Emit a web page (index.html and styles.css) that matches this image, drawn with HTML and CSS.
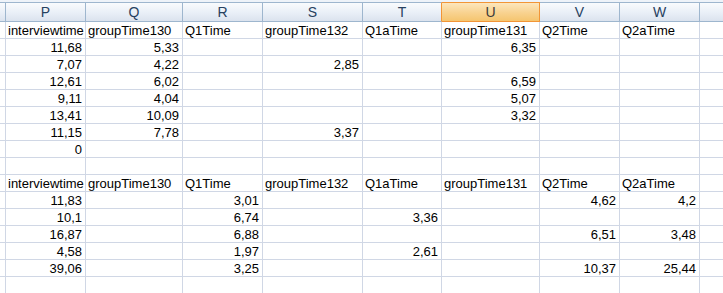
FILE: index.html
```html
<!DOCTYPE html>
<html>
<head>
<meta charset="utf-8">
<link rel="stylesheet" href="styles.css">
</head>
<body>
<div class="sheet">
  <div class="topband"></div>
  <div class="grid">
    <div class="hd"></div><div class="hd">P</div><div class="hd">Q</div><div class="hd">R</div><div class="hd">S</div><div class="hd pre-sel">T</div><div class="hd sel">U</div><div class="hd">V</div><div class="hd">W</div><div class="hd"></div>

    <div class="c"></div><div class="c">interviewtime</div><div class="c">groupTime130</div><div class="c">Q1Time</div><div class="c">groupTime132</div><div class="c">Q1aTime</div><div class="c">groupTime131</div><div class="c">Q2Time</div><div class="c">Q2aTime</div><div class="c"></div>

    <div class="c"></div><div class="c n">11,68</div><div class="c n">5,33</div><div class="c"></div><div class="c"></div><div class="c"></div><div class="c n">6,35</div><div class="c"></div><div class="c"></div><div class="c"></div>

    <div class="c"></div><div class="c n">7,07</div><div class="c n">4,22</div><div class="c"></div><div class="c n">2,85</div><div class="c"></div><div class="c"></div><div class="c"></div><div class="c"></div><div class="c"></div>

    <div class="c"></div><div class="c n">12,61</div><div class="c n">6,02</div><div class="c"></div><div class="c"></div><div class="c"></div><div class="c n">6,59</div><div class="c"></div><div class="c"></div><div class="c"></div>

    <div class="c"></div><div class="c n">9,11</div><div class="c n">4,04</div><div class="c"></div><div class="c"></div><div class="c"></div><div class="c n">5,07</div><div class="c"></div><div class="c"></div><div class="c"></div>

    <div class="c"></div><div class="c n">13,41</div><div class="c n">10,09</div><div class="c"></div><div class="c"></div><div class="c"></div><div class="c n">3,32</div><div class="c"></div><div class="c"></div><div class="c"></div>

    <div class="c"></div><div class="c n">11,15</div><div class="c n">7,78</div><div class="c"></div><div class="c n">3,37</div><div class="c"></div><div class="c"></div><div class="c"></div><div class="c"></div><div class="c"></div>

    <div class="c"></div><div class="c n">0</div><div class="c"></div><div class="c"></div><div class="c"></div><div class="c"></div><div class="c"></div><div class="c"></div><div class="c"></div><div class="c"></div>

    <div class="c"></div><div class="c"></div><div class="c"></div><div class="c"></div><div class="c"></div><div class="c"></div><div class="c"></div><div class="c"></div><div class="c"></div><div class="c"></div>

    <div class="c"></div><div class="c">interviewtime</div><div class="c">groupTime130</div><div class="c">Q1Time</div><div class="c">groupTime132</div><div class="c">Q1aTime</div><div class="c">groupTime131</div><div class="c">Q2Time</div><div class="c">Q2aTime</div><div class="c"></div>

    <div class="c"></div><div class="c n">11,83</div><div class="c"></div><div class="c n">3,01</div><div class="c"></div><div class="c"></div><div class="c"></div><div class="c n">4,62</div><div class="c n">4,2</div><div class="c"></div>

    <div class="c"></div><div class="c n">10,1</div><div class="c"></div><div class="c n">6,74</div><div class="c"></div><div class="c n">3,36</div><div class="c"></div><div class="c"></div><div class="c"></div><div class="c"></div>

    <div class="c"></div><div class="c n">16,87</div><div class="c"></div><div class="c n">6,88</div><div class="c"></div><div class="c"></div><div class="c"></div><div class="c n">6,51</div><div class="c n">3,48</div><div class="c"></div>

    <div class="c"></div><div class="c n">4,58</div><div class="c"></div><div class="c n">1,97</div><div class="c"></div><div class="c n">2,61</div><div class="c"></div><div class="c"></div><div class="c"></div><div class="c"></div>

    <div class="c"></div><div class="c n">39,06</div><div class="c"></div><div class="c n">3,25</div><div class="c"></div><div class="c"></div><div class="c"></div><div class="c n">10,37</div><div class="c n">25,44</div><div class="c"></div>

    <div class="c"></div><div class="c"></div><div class="c"></div><div class="c"></div><div class="c"></div><div class="c"></div><div class="c"></div><div class="c"></div><div class="c"></div><div class="c"></div>
  </div>
</div>
</body>
</html>
```

FILE: styles.css
```css
html, body {
  margin: 0;
  padding: 0;
  background: #ffffff;
  overflow: hidden;
}
.sheet {
  width: 723px;
  height: 293px;
  overflow: hidden;
  font-family: "Liberation Sans", Arial, sans-serif;
}
.topband {
  height: 2px;
  background: #eef3f9;
}
.grid {
  display: grid;
  grid-template-columns: 6px 80px 97px 80px 100px 79px 98px 80px 80px 30px;
  width: 730px;
}
.hd {
  box-sizing: border-box;
  height: 20px;
  border-top: 1px solid #9eb6ce;
  border-bottom: 1px solid #9eb6ce;
  border-right: 1px solid #9eb6ce;
  background: linear-gradient(#f9fbfd, #e9eff7 55%, #dbe3ee);
  color: #27415f;
  font-size: 14px;
  line-height: 18px;
  text-align: center;
}
.hd.pre-sel {
  border-right-color: #f29536;
}
.hd.sel {
  background: linear-gradient(#fce6bd, #f8d28f 55%, #f5c56f);
  border-top-color: #f29536;
  border-bottom-color: #f29536;
  border-right-color: #f29536;
  color: #3a3a3a;
}
.c {
  box-sizing: border-box;
  height: 17px;
  border-right: 1px solid #d0d7e5;
  border-bottom: 1px solid #d0d7e5;
  font-size: 13px;
  line-height: 17px;
  color: #000;
  padding: 0 3px 0 2px;
  white-space: nowrap;
  overflow: visible;
}
.c.n {
  text-align: right;
}
```
